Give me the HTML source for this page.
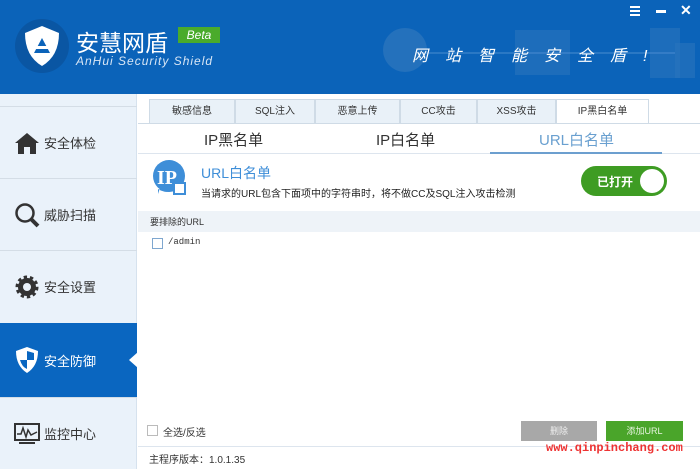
<!DOCTYPE html>
<html><head><meta charset="utf-8"><style>
*{margin:0;padding:0;box-sizing:border-box}
body{width:700px;height:469px;overflow:hidden;position:relative;font-family:"Liberation Sans","Noto Sans CJK SC",sans-serif;background:#fff;font-size:12px;color:#333}
.a{position:absolute}
#hd{left:0;top:0;width:700px;height:94px;background:#0b63b9}
#sb{left:0;top:94px;width:137px;height:375px;background:#eaf2fa;border-right:1px solid #d6e2ee}
.it{position:absolute;left:0;width:137px;height:72px;border-top:1px solid #d4dde6;display:flex;align-items:center;padding-left:14px;font-size:13px;color:#333}
.it span{margin-left:4px}
.tab{position:absolute;top:99px;height:25px;background:#e9f1f8;border:1px solid #cfdbe6;font-size:10px;text-align:center;line-height:24px;color:#333}
</style></head><body>
<div id="hd" class="a">
 <svg class="a" style="left:14px;top:18px" width="56" height="56" viewBox="0 0 56 56"><circle cx="28" cy="28" r="27" fill="#0a56a3"/><path d="M28 8 L45 15 Q45 38 28 48 Q11 38 11 15 Z" fill="#fff"/><path d="M20 35 L28 20 L36 35 Z" fill="#0b63b9"/><rect x="22" y="28" width="12" height="3" fill="#fff"/></svg>
 <div class="a" style="left:76px;top:24px;font-size:23px;color:#fff;letter-spacing:0px">安慧网盾</div>
 <div class="a" style="left:178px;top:27px;width:42px;height:16px;background:#4aab2b;color:#fff;font-style:italic;font-size:12px;text-align:center;line-height:16px">Beta</div>
 <div class="a" style="left:76px;top:54px;font-size:12px;color:#d8e6f5;font-style:italic;letter-spacing:1px">AnHui Security Shield</div>
 <svg class="a" style="left:375px;top:25px" width="320" height="60"><circle cx="30" cy="25" r="22" fill="#2a74bd" opacity=".8"/><rect x="140" y="5" width="55" height="45" fill="#2a74bd" opacity=".6"/><rect x="275" y="3" width="30" height="50" fill="#2a74bd" opacity=".6"/><rect x="300" y="18" width="20" height="35" fill="#2a74bd" opacity=".6"/><line x1="40" y1="28" x2="300" y2="28" stroke="#4a8cd0" stroke-width="1"/></svg>
 <div class="a" style="left:412px;top:42px;font-size:16px;color:#fff;font-style:italic;letter-spacing:17px">网站智能安全盾!</div>
 <div class="a" style="left:630px;top:6px;width:10px;height:2px;background:#fff;box-shadow:0 4px #fff,0 8px #fff"></div>
 <div class="a" style="left:656px;top:10px;width:10px;height:3px;background:#fff"></div>
 <div class="a" style="left:680px;top:2px;color:#fff;font-size:14px;font-weight:bold">✕</div>
</div>
<div id="sb" class="a">
 <div class="it" style="top:12px"><svg width="26" height="24"><path d="M1 12 L13 2 L25 12 L22 12 L22 23 L16 23 L16 16 L10 16 L10 23 L4 23 L4 12Z" fill="#333"/></svg><span>安全体检</span></div>
 <div class="it" style="top:84px"><svg width="26" height="26"><circle cx="11" cy="11" r="8.5" fill="none" stroke="#333" stroke-width="2.5"/><line x1="17" y1="17" x2="24" y2="24" stroke="#333" stroke-width="4"/></svg><span>威胁扫描</span></div>
 <div class="it" style="top:156px"><svg width="26" height="26"><circle cx="13" cy="13" r="9" fill="#333" stroke="#333" stroke-width="5" stroke-dasharray="3 2.6"/><circle cx="13" cy="13" r="4" fill="#eaf2fa"/></svg><span>安全设置</span></div>
 <div class="it" style="top:229px;height:74px;background:#0a66c0;color:#fff;border:none"><svg width="26" height="28"><path d="M13 1 L24 5 Q24 20 13 27 Q2 20 2 5Z" fill="#fff"/><path d="M13 5 L13 14 L20 14 Q20 8 20 7Z M13 14 L6 14 Q8 21 13 23Z" fill="#0a66c0"/></svg><span>安全防御</span></div>
 <div class="a" style="left:129px;top:258px;width:0;height:0;border-top:8px solid transparent;border-bottom:8px solid transparent;border-right:9px solid #fff"></div>
 <div class="it" style="top:303px"><svg width="26" height="24"><rect x="1" y="2" width="24" height="16" fill="none" stroke="#333" stroke-width="2"/><polyline points="3,12 7,12 9,6 12,15 14,8 17,13 23,10" fill="none" stroke="#333" stroke-width="1.5"/><rect x="5" y="20" width="16" height="2" fill="#333"/></svg><span>监控中心</span></div>
</div>
<div class="tab" style="left:149px;width:86px">敏感信息</div>
<div class="tab" style="left:235px;width:80px">SQL注入</div>
<div class="tab" style="left:315px;width:85px">恶意上传</div>
<div class="tab" style="left:400px;width:77px">CC攻击</div>
<div class="tab" style="left:477px;width:79px">XSS攻击</div>
<div class="tab" style="left:556px;width:93px;background:#fff;border-bottom-color:#fff">IP黑白名单</div>
<div class="a" style="left:138px;top:123px;width:562px;height:1px;background:#cfdbe6"></div>
<div class="a" style="left:204px;top:129px;font-size:15px;color:#333">IP黑名单</div>
<div class="a" style="left:376px;top:129px;font-size:15px;color:#333">IP白名单</div>
<div class="a" style="left:539px;top:129px;font-size:15px;color:#6aa0d0">URL白名单</div>
<div class="a" style="left:138px;top:153px;width:562px;height:1px;background:#dde5ee"></div>
<div class="a" style="left:490px;top:152px;width:172px;height:2px;background:#6c9fcf"></div>
<svg class="a" style="left:152px;top:160px" width="36" height="36"><path d="M17 0 A16 16 0 1 1 6 29 L6 34 Z" fill="#3e8ed8"/><circle cx="17" cy="16" r="16" fill="#3e8ed8"/><text x="5" y="24" font-family="Liberation Serif" font-weight="bold" font-size="20" fill="#fff">IP</text><rect x="22" y="23" width="11" height="11" fill="#fff" stroke="#3e8ed8" stroke-width="2"/></svg>
<div class="a" style="left:201px;top:163px;font-size:14px;color:#3e8ed8">URL白名单</div>
<div class="a" style="left:201px;top:185px;font-size:10px;color:#222">当请求的URL包含下面项中的字符串时，将不做CC及SQL注入攻击检测</div>
<div class="a" style="left:581px;top:166px;width:86px;height:30px;border-radius:15px;background:#3e9c23"></div>
<div class="a" style="left:597px;top:173px;font-size:12px;color:#fff;font-weight:bold">已打开</div>
<div class="a" style="left:640px;top:169px;width:24px;height:24px;border-radius:50%;background:#fff"></div>
<div class="a" style="left:138px;top:211px;width:562px;height:21px;background:#eef3f8"></div>
<div class="a" style="left:150px;top:215px;font-size:9px;color:#333">要排除的URL</div>
<div class="a" style="left:152px;top:238px;width:11px;height:11px;border:1px solid #7fa7cf"></div>
<div class="a" style="left:168px;top:237px;font-size:9px;font-family:'Liberation Mono',monospace;color:#333">/admin</div>
<div class="a" style="left:147px;top:425px;width:11px;height:11px;border:1px solid #bbb"></div>
<div class="a" style="left:163px;top:424px;font-size:10px;color:#333">全选/反选</div>
<div class="a" style="left:521px;top:421px;width:76px;height:20px;background:#a8a8a8;color:#eee;font-size:9px;text-align:center;line-height:20px">删除</div>
<div class="a" style="left:606px;top:421px;width:77px;height:20px;background:#4aa52a;color:#e8f5e0;font-size:9px;text-align:center;line-height:20px">添加URL</div>
<div class="a" style="left:138px;top:446px;width:562px;height:1px;background:#dde5ee"></div>
<div class="a" style="left:149px;top:451px;font-size:10px;color:#333">主程序版本：1.0.1.35</div>
<div class="a" style="left:546px;top:441px;font-size:12px;font-family:'Liberation Mono',monospace;color:#e33;font-weight:bold">www.qinpinchang.com</div>
</body></html>
